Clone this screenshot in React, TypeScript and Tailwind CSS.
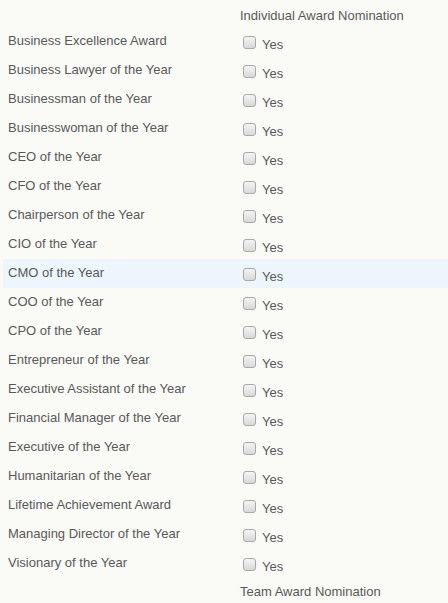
import React from "react";

const awards = [
  "Business Excellence Award",
  "Business Lawyer of the Year",
  "Businessman of the Year",
  "Businesswoman of the Year",
  "CEO of the Year",
  "CFO of the Year",
  "Chairperson of the Year",
  "CIO of the Year",
  "CMO of the Year",
  "COO of the Year",
  "CPO of the Year",
  "Entrepreneur of the Year",
  "Executive Assistant of the Year",
  "Financial Manager of the Year",
  "Executive of the Year",
  "Humanitarian of the Year",
  "Lifetime Achievement Award",
  "Managing Director of the Year",
  "Visionary of the Year",
];

function Box() {
  return (
    <span className="block w-[13px] h-[13px] rounded-[3px] border border-[#a9a9a9] bg-gradient-to-b from-[#f4f4f4] to-[#d9d9d9]" />
  );
}

export default function App() {
  return (
    <div
      className="w-[448px] h-[603px] overflow-hidden bg-[#fafaf7] text-[#595959] text-[13px] leading-[15px]"
      style={{ fontFamily: '"Liberation Sans", Arial, sans-serif' }}
    >
      <div className="h-[27px] flex">
        <div className="w-[240px]" />
        <div className="pt-[8px]">Individual Award Nomination</div>
      </div>
      {awards.map((a, i) => (
        <div
          key={a}
          className={`h-[29px] flex ml-[3px] ${i === 8 ? "bg-[#edf6fd]" : ""}`}
        >
          <div className="w-[237px] pl-[5px] pt-[6px]">{a}</div>
          <div className="flex items-start pt-[9px] pl-[3px]">
            <Box />
            <span className="ml-[6px] pt-[1px] leading-[15px]">Yes</span>
          </div>
        </div>
      ))}
      <div className="h-[25px] flex">
        <div className="w-[240px]" />
        <div className="pt-[6px]">Team Award Nomination</div>
      </div>
    </div>
  );
}
